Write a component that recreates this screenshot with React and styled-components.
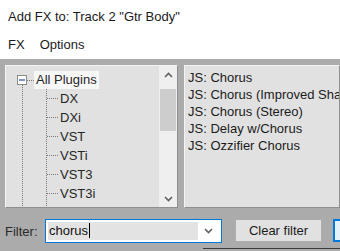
import React from "react";
import styled, { createGlobalStyle } from "styled-components";

const Global = createGlobalStyle`
  html, body { margin: 0; padding: 0; background: #ffffff; }
  body { font-family: "Liberation Sans", Arial, sans-serif; }
  #root { width: 340px; height: 251px; overflow: hidden; }
`;

const Window = styled.div`
  width: 340px;
  height: 251px;
  display: flex;
  flex-direction: column;
  background: #ffffff;
  overflow: hidden;
`;

const TitleBar = styled.div`
  height: 30px;
  display: flex;
  align-items: center;
  padding: 2px 0 0 8px;
  font-size: 13px;
  color: #1b1b1b;
  box-sizing: border-box;
`;

const MenuBar = styled.div`
  height: 29px;
  display: flex;
  align-items: center;
  gap: 15px;
  padding-left: 8px;
  font-size: 13px;
  color: #1b1b1b;
  box-sizing: border-box;
`;

const Body = styled.div`
  flex: 1;
  background: #ababab;
  display: flex;
  flex-direction: column;
  padding: 6px 0 0 5px;
  box-sizing: border-box;
  min-width: 0;
`;

const Panels = styled.div`
  display: flex;
  gap: 6px;
  height: 143px;
`;

const Panel = styled.div`
  position: relative;
  background: #e1e1e1;
  border: 1px solid #8f8f8f;
  border-top-color: #f4f4f4;
  border-left-color: #f4f4f4;
  box-sizing: border-box;
  width: ${(p) => p.$w}px;
  flex: ${(p) => (p.$w ? "none" : "1")};
  display: flex;
  overflow: hidden;
`;

const Tree = styled.div`
  flex: 1;
  position: relative;
`;

const TreeCanvas = styled.svg`
  position: absolute;
  left: 0;
  top: 0;
`;

const TreeRow = styled.div`
  position: absolute;
  left: ${(p) => p.$x}px;
  top: ${(p) => p.$y}px;
  height: 18px;
  line-height: 18px;
  font-size: 13px;
  color: #262626;
  padding: 0 2px;
  background: ${(p) => (p.$sel ? "#f7f7f7" : "transparent")};
`;

const ScrollBar = styled.div`
  width: 18px;
  background: #efefef;
  display: flex;
  flex-direction: column;
  align-items: stretch;
  flex: none;
`;

const ScrollArrow = styled.div`
  height: 17px;
  display: flex;
  align-items: center;
  justify-content: center;
`;

const Thumb = styled.div`
  height: 42px;
  background: #cdcdcd;
  margin: 6px 1px 0 1px;
`;

const ScrollSpace = styled.div`
  flex: 1;
`;

const List = styled.div`
  padding: 3px 0 0 3px;
  display: flex;
  flex-direction: column;
`;

const ListItem = styled.div`
  height: 17px;
  line-height: 17px;
  font-size: 13px;
  color: #1b1b1b;
  white-space: nowrap;
`;

const FilterRow = styled.div`
  display: flex;
  align-items: center;
  margin-top: 10px;
  height: 25px;
`;

const FilterLabel = styled.div`
  width: 40px;
  flex: none;
  font-size: 13px;
  color: #2a2a2a;
  padding-top: 2px;
`;

const Combo = styled.div`
  width: 177px;
  flex: none;
  height: 24px;
  box-sizing: border-box;
  border: 1px solid #0078d7;
  background: #ffffff;
  display: flex;
  align-items: center;
  padding: 2px;
`;

const ComboEdit = styled.div`
  width: 149px;
  height: 18px;
  background: #e3e3e3;
  font-size: 13px;
  line-height: 18px;
  color: #111;
  display: flex;
  align-items: center;
  padding-left: 1px;
`;

const Caret = styled.span`
  display: inline-block;
  width: 1px;
  height: 15px;
  background: #000;
  margin-left: 1px;
`;

const ComboArrow = styled.div`
  flex: 1;
  display: flex;
  align-items: center;
  justify-content: center;
`;

const Button = styled.div`
  margin-left: ${(p) => p.$ml}px;
  width: ${(p) => p.$w}px;
  height: 23px;
  box-sizing: border-box;
  border: 1px solid ${(p) => (p.$focus ? "#0078d7" : "#adadad")};
  border-width: ${(p) => (p.$focus ? "2px" : "1px")};
  background: ${(p) => (p.$focus ? "#e5f1fb" : "#e1e1e1")};
  font-size: 13px;
  color: #1b1b1b;
  display: flex;
  align-items: center;
  justify-content: center;
  flex: none;
`;

const Footer = styled.div`
  margin-top: 5px;
  margin-left: 198px;
  height: 1px;
  background: #3a3a3a;
`;

const Chevron = ({ up }) => (
  <svg width="9" height="6" viewBox="0 0 9 6">
    <path
      d={up ? "M1 5 L4.5 1.5 L8 5" : "M1 1 L4.5 4.5 L8 1"}
      fill="none"
      stroke="#606060"
      strokeWidth="1.6"
    />
  </svg>
);

const children = ["DX", "DXi", "VST", "VSTi", "VST3", "VST3i"];

export default function App() {
  const dots = (x1, y1, x2, y2) => (
    <line
      x1={x1}
      y1={y1}
      x2={x2}
      y2={y2}
      stroke="#7a7a7a"
      strokeWidth="1"
      strokeDasharray="1 1"
    />
  );
  return (
    <Window>
      <Global />
      <TitleBar>Add FX to: Track 2 "Gtr Body"</TitleBar>
      <MenuBar>
        <span>FX</span>
        <span>Options</span>
      </MenuBar>
      <Body>
        <Panels>
          <Panel $w={173}>
            <Tree>
              <TreeCanvas width="155" height="141">
                <rect x="11.5" y="9.5" width="9" height="9" fill="#fff" stroke="#8a8a8a" />
                <line x1="13" y1="14" x2="19" y2="14" stroke="#1f4fa0" strokeWidth="1.2" />
                {dots(21, 14.5, 28, 14.5)}
                {dots(16.5, 19, 16.5, 141)}
                {dots(40.5, 23, 40.5, 141)}
                {children.map((c, i) => (
                  <React.Fragment key={c}>{dots(41, 32.5 + i * 19, 52, 32.5 + i * 19)}</React.Fragment>
                ))}
              </TreeCanvas>
              <TreeRow $x={28} $y={5} $sel>All Plugins</TreeRow>
              {children.map((c, i) => (
                <TreeRow key={c} $x={52} $y={24 + i * 19}>
                  {c}
                </TreeRow>
              ))}
            </Tree>
            <ScrollBar>
              <ScrollArrow>
                <Chevron up />
              </ScrollArrow>
              <Thumb />
              <ScrollSpace />
              <ScrollArrow>
                <Chevron />
              </ScrollArrow>
            </ScrollBar>
          </Panel>
          <Panel>
            <List>
              <ListItem>JS: Chorus</ListItem>
              <ListItem>JS: Chorus (Improved Shaper)</ListItem>
              <ListItem>JS: Chorus (Stereo)</ListItem>
              <ListItem>JS: Delay w/Chorus</ListItem>
              <ListItem>JS: Ozzifier Chorus</ListItem>
            </List>
          </Panel>
        </Panels>
        <FilterRow>
          <FilterLabel>Filter:</FilterLabel>
          <Combo>
            <ComboEdit>
              chorus
              <Caret />
            </ComboEdit>
            <ComboArrow>
              <Chevron />
            </ComboArrow>
          </Combo>
          <Button $ml={13} $w={87}>Clear filter</Button>
          <Button $ml={11} $w={60} $focus />
        </FilterRow>
        <Footer />
      </Body>
    </Window>
  );
}
